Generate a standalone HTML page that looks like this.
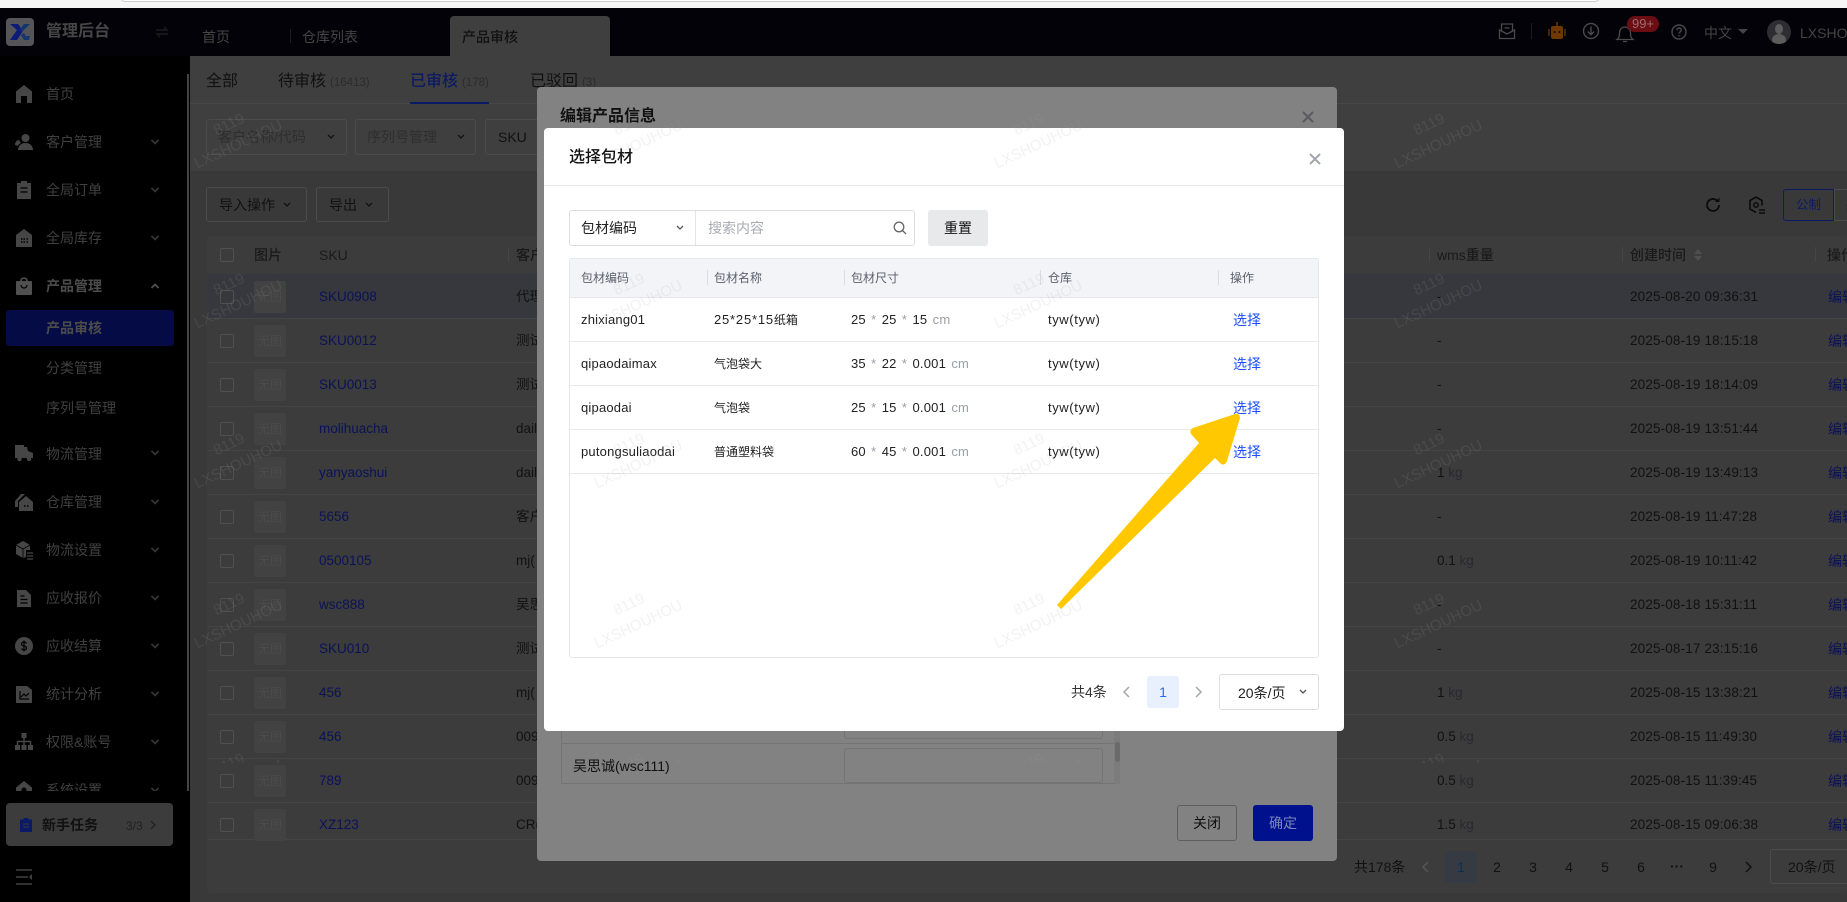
<!DOCTYPE html>
<html lang="zh"><head><meta charset="utf-8"><title>产品审核</title>
<style>
*{box-sizing:border-box}
html,body{margin:0;padding:0;width:1847px;height:902px;overflow:hidden;background:#393939;font-family:"Liberation Sans","Noto Sans CJK SC",sans-serif;font-size:13px;color:#111}
.a{position:absolute}
.t{position:absolute;white-space:nowrap;line-height:20px;height:20px}
svg{position:absolute;overflow:visible}
.tb .sku{left:319px;color:#0b1258;font-size:13.5px}
.tb .cu{left:516px;font-size:13.5px;color:#111}
.tb .w{left:1437px;font-size:13.5px;color:#111}
.tb .w i{font-style:normal;color:#2a2a2e}
.tb .d{left:1630px;font-size:13.5px;letter-spacing:.15px;color:#111}
.tb .e{left:1828px;font-size:14px;color:#0b1258}
.tb .l{position:absolute;left:207px;width:1640px;height:1px;background:#444}
.cb{position:absolute;left:220px;width:14px;height:14px;border:1px solid #505050;border-radius:2px}
.th{position:absolute;left:254px;width:32px;height:32px;background:#424242;border-radius:2px;color:#4b4b4b;font-size:12px;line-height:32px;text-align:center}
.bt{position:absolute;border:1px solid #4c4c4c;border-radius:3px}
.dl .t{font-size:13px;color:#222;letter-spacing:.2px}
.dl .h{color:#5a5f6b;font-size:12px;letter-spacing:0}
.dl .n{font-size:13px;letter-spacing:.8px}
.dl .n b{font-weight:400;font-size:12px;letter-spacing:0}
.dl .y{letter-spacing:.6px}
.dl .s{color:#1d4fff;font-size:14px;left:1233px;letter-spacing:0}
.dl .rl{position:absolute;left:570px;width:748px;height:1px;background:#e8e9ec}
.dl .sp{position:absolute;top:270px;width:1px;height:15px;background:#dcdde2}
.dl i{font-style:normal;color:#9a9da5;margin:0 1.5px}
.wm{position:absolute;width:130px;height:44px;margin:-22px 0 0 -65px;text-align:center;font-size:15px;line-height:22px;color:rgba(160,160,160,.14);transform:rotate(-25deg);white-space:nowrap}
.m{position:absolute;left:46px;white-space:nowrap;line-height:20px;height:20px;font-size:14px;color:#404040}
</style></head><body>

<!-- browser strip -->
<div class="a" style="left:0;top:0;width:1847px;height:9px;background:#f6f6f6"></div>
<div class="a" style="left:120px;top:-8px;width:1480px;height:10px;background:#fff;border:1px solid #ccc;border-radius:6px"></div>

<!-- main background -->
<div class="a" style="left:190px;top:56px;width:1657px;height:115px;background:#3f3f3f"></div>
<div class="a" style="left:190px;top:103px;width:1657px;height:1px;background:#474747"></div>
<div class="a" style="left:207px;top:236px;width:1640px;height:657px;background:#3c3c3c;border-radius:3px"></div>

<!-- tabs -->
<div class="t" style="left:206px;top:72px;font-size:16px;color:#111">全部</div>
<div class="t" style="left:278px;top:72px;font-size:16px;color:#111">待审核</div>
<div class="t" style="left:330px;top:73px;font-size:11.5px;color:#2c2c2c">(16413)</div>
<div class="t" style="left:410px;top:72px;font-size:16px;color:#0b1a66;font-weight:500">已审核</div>
<div class="t" style="left:462px;top:73px;font-size:11.5px;color:#2c2c2c">(178)</div>
<div class="a" style="left:410px;top:102px;width:79px;height:2px;background:#0b1a66"></div>
<div class="t" style="left:530px;top:72px;font-size:16px;color:#111">已驳回</div>
<div class="t" style="left:582px;top:73px;font-size:11.5px;color:#2c2c2c">(3)</div>

<!-- filters -->
<div class="bt" style="left:206px;top:119px;width:141px;height:36px"></div>
<div class="t" style="left:218px;top:127px;font-size:14px;color:#2e2e2e">客户名称/代码</div>
<svg style="left:326px;top:133px" width="10" height="8" viewBox="0 0 10 8"><path d="M2 2l3 3 3-3" fill="none" stroke="#111" stroke-width="1.3"/></svg>
<div class="bt" style="left:355px;top:119px;width:121px;height:36px"></div>
<div class="t" style="left:367px;top:127px;font-size:14px;color:#2e2e2e">序列号管理</div>
<svg style="left:456px;top:133px" width="10" height="8" viewBox="0 0 10 8"><path d="M2 2l3 3 3-3" fill="none" stroke="#111" stroke-width="1.3"/></svg>
<div class="bt" style="left:485px;top:119px;width:70px;height:36px"></div>
<div class="t" style="left:498px;top:127px;font-size:14px;color:#111">SKU</div>

<div class="bt" style="left:206px;top:187px;width:101px;height:35px"></div>
<div class="t" style="left:219px;top:195px;font-size:14px;color:#111">导入操作</div>
<svg style="left:282px;top:201px" width="10" height="8" viewBox="0 0 10 8"><path d="M2 2l3 3 3-3" fill="none" stroke="#111" stroke-width="1.3"/></svg>
<div class="bt" style="left:316px;top:187px;width:73px;height:35px"></div>
<div class="t" style="left:329px;top:195px;font-size:14px;color:#111">导出</div>
<svg style="left:364px;top:201px" width="10" height="8" viewBox="0 0 10 8"><path d="M2 2l3 3 3-3" fill="none" stroke="#111" stroke-width="1.3"/></svg>

<!-- table right tools -->
<svg style="left:1703px;top:195px" width="20" height="20" viewBox="0 0 20 20"><path d="M16 10a6 6 0 1 1-2-4.500" fill="none" stroke="#0c0c0c" stroke-width="1.800"/><path d="M16.500 2.500v4.500h-4.500z" fill="#0c0c0c"/></svg>
<svg style="left:1747px;top:195px" width="20" height="20" viewBox="0 0 20 20"><path d="M9 2l6 3.500v5M9 17.500l-6-3.500v-8.500l6-3.500" fill="none" stroke="#0c0c0c" stroke-width="1.600"/><circle cx="9" cy="10" r="2.200" fill="none" stroke="#0c0c0c" stroke-width="1.500"/><path d="M12 15h6M12 18h6" stroke="#0c0c0c" stroke-width="1.400"/></svg>
<div class="a" style="left:1783px;top:189px;width:51px;height:32px;border:1px solid #0b1a66;border-radius:3px 0 0 3px;color:#0b1a66;font-size:12.500px;line-height:30px;text-align:center">公制</div>
<div class="a" style="left:1834px;top:189px;width:40px;height:32px;border:1px solid #4c4c4c;color:#111;font-size:12.500px;line-height:30px;padding-left:11px">英制</div>

<!-- table -->
<div class="tb">
<div class="cb" style="top:248px"></div>
<div class="t" style="left:254px;top:245px;font-size:14px;font-weight:500;color:#1a1a1a">图片</div>
<div class="t" style="left:319px;top:245px;font-size:14px;color:#1a1a1a">SKU</div>
<div class="a" style="left:508px;top:247px;width:1px;height:15px;background:#464646"></div>
<div class="t" style="left:516px;top:245px;font-size:14px;font-weight:500;color:#1a1a1a">客户名称</div>
<div class="a" style="left:1429px;top:247px;width:1px;height:15px;background:#464646"></div>
<div class="t" style="left:1437px;top:245px;font-size:14px;color:#1a1a1a;font-weight:500">wms重量</div>
<div class="a" style="left:1622px;top:247px;width:1px;height:15px;background:#464646"></div>
<div class="t" style="left:1630px;top:245px;font-size:14px;color:#1a1a1a;font-weight:500">创建时间</div>
<svg style="left:1693px;top:248px" width="10" height="14" viewBox="0 0 10 14"><path d="M5 1l4 5H1zM5 13l4-5H1z" fill="#4f4f4f"/></svg>
<div class="a" style="left:1815px;top:247px;width:1px;height:15px;background:#464646"></div>
<div class="t" style="left:1827px;top:245px;font-size:14px;color:#1a1a1a;font-weight:500">操作</div>

<div class="a" style="left:207px;top:274px;width:1640px;height:44px;background:#36383d"></div>
<div class="l" style="top:318px"></div><div class="l" style="top:362px"></div><div class="l" style="top:406px"></div><div class="l" style="top:450px"></div><div class="l" style="top:494px"></div><div class="l" style="top:538px"></div><div class="l" style="top:582px"></div><div class="l" style="top:626px"></div><div class="l" style="top:670px"></div><div class="l" style="top:714px"></div><div class="l" style="top:758px"></div><div class="l" style="top:802px"></div><div class="l" style="top:839px"></div>

<div class="cb" style="top:290px"></div><div class="th" style="top:281px">无图</div><div class="t sku" style="top:287px">SKU0908</div><div class="t cu" style="top:287px">代理商</div><div class="t w" style="top:287px">-</div><div class="t d" style="top:287px">2025-08-20 09:36:31</div><div class="t e" style="top:287px">编辑</div>
<div class="cb" style="top:334px"></div><div class="th" style="top:325px">无图</div><div class="t sku" style="top:331px">SKU0012</div><div class="t cu" style="top:331px">测试</div><div class="t w" style="top:331px">-</div><div class="t d" style="top:331px">2025-08-19 18:15:18</div><div class="t e" style="top:331px">编辑</div>
<div class="cb" style="top:378px"></div><div class="th" style="top:369px">无图</div><div class="t sku" style="top:375px">SKU0013</div><div class="t cu" style="top:375px">测试</div><div class="t w" style="top:375px">-</div><div class="t d" style="top:375px">2025-08-19 18:14:09</div><div class="t e" style="top:375px">编辑</div>
<div class="cb" style="top:422px"></div><div class="th" style="top:413px">无图</div><div class="t sku" style="top:419px">molihuacha</div><div class="t cu" style="top:419px">daily</div><div class="t w" style="top:419px">-</div><div class="t d" style="top:419px">2025-08-19 13:51:44</div><div class="t e" style="top:419px">编辑</div>
<div class="cb" style="top:466px"></div><div class="th" style="top:457px">无图</div><div class="t sku" style="top:463px">yanyaoshui</div><div class="t cu" style="top:463px">daily</div><div class="t w" style="top:463px">1 <i>kg</i></div><div class="t d" style="top:463px">2025-08-19 13:49:13</div><div class="t e" style="top:463px">编辑</div>
<div class="cb" style="top:510px"></div><div class="th" style="top:501px">无图</div><div class="t sku" style="top:507px">5656</div><div class="t cu" style="top:507px">客户</div><div class="t w" style="top:507px">-</div><div class="t d" style="top:507px">2025-08-19 11:47:28</div><div class="t e" style="top:507px">编辑</div>
<div class="cb" style="top:554px"></div><div class="th" style="top:545px">无图</div><div class="t sku" style="top:551px">0500105</div><div class="t cu" style="top:551px">mj(</div><div class="t w" style="top:551px">0.1 <i>kg</i></div><div class="t d" style="top:551px">2025-08-19 10:11:42</div><div class="t e" style="top:551px">编辑</div>
<div class="cb" style="top:598px"></div><div class="th" style="top:589px">无图</div><div class="t sku" style="top:595px">wsc888</div><div class="t cu" style="top:595px">吴思诚</div><div class="t w" style="top:595px">-</div><div class="t d" style="top:595px">2025-08-18 15:31:11</div><div class="t e" style="top:595px">编辑</div>
<div class="cb" style="top:642px"></div><div class="th" style="top:633px">无图</div><div class="t sku" style="top:639px">SKU010</div><div class="t cu" style="top:639px">测试</div><div class="t w" style="top:639px">-</div><div class="t d" style="top:639px">2025-08-17 23:15:16</div><div class="t e" style="top:639px">编辑</div>
<div class="cb" style="top:686px"></div><div class="th" style="top:677px">无图</div><div class="t sku" style="top:683px">456</div><div class="t cu" style="top:683px">mj(</div><div class="t w" style="top:683px">1 <i>kg</i></div><div class="t d" style="top:683px">2025-08-15 13:38:21</div><div class="t e" style="top:683px">编辑</div>
<div class="cb" style="top:730px"></div><div class="th" style="top:721px">无图</div><div class="t sku" style="top:727px">456</div><div class="t cu" style="top:727px">009</div><div class="t w" style="top:727px">0.5 <i>kg</i></div><div class="t d" style="top:727px">2025-08-15 11:49:30</div><div class="t e" style="top:727px">编辑</div>
<div class="cb" style="top:774px"></div><div class="th" style="top:765px">无图</div><div class="t sku" style="top:771px">789</div><div class="t cu" style="top:771px">009</div><div class="t w" style="top:771px">0.5 <i>kg</i></div><div class="t d" style="top:771px">2025-08-15 11:39:45</div><div class="t e" style="top:771px">编辑</div>
<div class="cb" style="top:818px"></div><div class="th" style="top:809px">无图</div><div class="t sku" style="top:815px">XZ123</div><div class="t cu" style="top:815px">CR(</div><div class="t w" style="top:815px">1.5 <i>kg</i></div><div class="t d" style="top:815px">2025-08-15 09:06:38</div><div class="t e" style="top:815px">编辑</div>
</div>

<!-- main pagination -->
<div class="t" style="left:1354px;top:857px;font-size:14px;color:#111">共178条</div>
<svg style="left:1421px;top:861px" width="10" height="12" viewBox="0 0 10 12"><path d="M7 1L2 6l5 5" fill="none" stroke="#555" stroke-width="1.500"/></svg>
<div class="a" style="left:1445px;top:851px;width:32px;height:32px;background:#363a42;border-radius:3px;text-align:center;line-height:32px;font-size:14px;color:#0b2e55">1</div>
<div class="t" style="left:1481px;width:32px;text-align:center;top:857px;font-size:14px;color:#111">2</div>
<div class="t" style="left:1517px;width:32px;text-align:center;top:857px;font-size:14px;color:#111">3</div>
<div class="t" style="left:1553px;width:32px;text-align:center;top:857px;font-size:14px;color:#111">4</div>
<div class="t" style="left:1589px;width:32px;text-align:center;top:857px;font-size:14px;color:#111">5</div>
<div class="t" style="left:1625px;width:32px;text-align:center;top:857px;font-size:14px;color:#111">6</div>
<div class="t" style="left:1661px;width:32px;text-align:center;top:856px;font-size:14px;font-weight:700;color:#111">···</div>
<div class="t" style="left:1697px;width:32px;text-align:center;top:857px;font-size:14px;color:#111">9</div>
<svg style="left:1743px;top:861px" width="10" height="12" viewBox="0 0 10 12"><path d="M3 1l5 5-5 5" fill="none" stroke="#111" stroke-width="1.500"/></svg>
<div class="a" style="left:1770px;top:849px;width:100px;height:35px;border:1px solid #4c4c4c;border-radius:3px"></div>
<div class="t" style="left:1788px;top:857px;font-size:14px;color:#111">20条/页</div>

<!-- header -->
<div class="a" style="left:0;top:8px;width:1847px;height:48px;background:#020208"></div>
<div class="a" style="left:6px;top:18px;width:28px;height:28px;background:#555557;border-radius:4px"></div>
<svg style="left:6px;top:18px" width="28" height="28" viewBox="0 0 28 28"><path d="M4 6h8l5 7-6 9H4l7-10z" fill="#0c1a78"/><path d="M24 6h-6l-4 5 2 3zM18 15l4 7h-4l-3-5zM24 18l-1 4h-1l-2-4z" fill="#12366e"/></svg>
<div class="t" style="left:46px;top:22px;font-size:16px;font-weight:700;color:#464646">管理后台</div>
<svg style="left:155px;top:26px" width="14" height="12" viewBox="0 0 14 12"><path d="M1 4h11L9 1M13 8H2l3 3" fill="none" stroke="#1c1c1c" stroke-width="1.400"/></svg>
<div class="t" style="left:202px;top:27px;font-size:14px;color:#454545">首页</div>
<div class="a" style="left:290px;top:29px;width:1px;height:14px;background:#1c1c1c"></div>
<div class="t" style="left:302px;top:27px;font-size:14px;color:#454545">仓库列表</div>
<div class="a" style="left:450px;top:16px;width:160px;height:40px;background:#3f3f3f;border-radius:4px 4px 0 0"></div>
<div class="t" style="left:462px;top:27px;font-size:14px;font-weight:500;color:#111">产品审核</div>

<svg style="left:1498px;top:22px" width="18" height="18" viewBox="0 0 18 18" fill="none" stroke="#4a4a4a" stroke-width="1.300"><path d="M3.500 9V2h11v7"/><path d="M1.500 8l7.500 4 7.500-4v8.500h-15z"/><path d="M6.500 6h5"/></svg>
<div class="a" style="left:1531px;top:23px;width:1px;height:16px;background:#1c1c1c"></div>
<svg style="left:1548px;top:22px" width="18" height="18" viewBox="0 0 18 18"><path d="M9 0v4" stroke="#6e3800" stroke-width="1.500"/><rect x="3" y="4" width="12" height="13" rx="2" fill="#6e3800"/><path d="M1 7v7M17 7v7" stroke="#6e3800" stroke-width="1.300"/><circle cx="6.500" cy="10" r="1" fill="#0a0a0a"/><circle cx="11.500" cy="10" r="1" fill="#0a0a0a"/></svg>
<svg style="left:1582px;top:22px" width="18" height="18" viewBox="0 0 18 18" fill="none" stroke="#4a4a4a" stroke-width="1.400"><circle cx="9" cy="9" r="7.500"/><path d="M9 4.500v8M5.800 9.500L9 12.700l3.200-3.200"/></svg>
<svg style="left:1616px;top:24px" width="18" height="19" viewBox="0 0 18 19" fill="none" stroke="#4a4a4a" stroke-width="1.300"><path d="M1 15.500c2-1.500 2.500-3 2.500-6.500 0-3.500 2.500-6 5.500-6s5.500 2.500 5.500 6c0 3.500.5 5 2.500 6.500z"/><path d="M7 17.500h4"/></svg>
<div class="a" style="left:1627px;top:16px;width:32px;height:16px;background:#6b0e14;border-radius:8px;color:#a06a6e;font-size:13px;line-height:16px;text-align:center">99+</div>
<svg style="left:1671px;top:24px" width="16" height="16" viewBox="0 0 16 16" fill="none" stroke="#4a4a4a" stroke-width="1.400"><circle cx="8" cy="8" r="7"/><path d="M5.800 6.200c0-1.300 1-2.200 2.200-2.200s2.200.9 2.200 2.100c0 1.800-2.200 1.800-2.200 3.500M8 11v1.500"/></svg>
<div class="t" style="left:1704px;top:23px;font-size:14px;color:#454545">中文</div>
<svg style="left:1738px;top:29px" width="10" height="6" viewBox="0 0 10 6"><path d="M0 0h10L5 5z" fill="#454545"/></svg>
<div class="a" style="left:1767px;top:20px;width:24px;height:24px;border-radius:50%;background:#2e2e32;overflow:hidden"><div class="a" style="left:8px;top:4px;width:8px;height:10px;border-radius:50%;background:#5c5c5c"></div><div class="a" style="left:5px;top:14px;width:14px;height:12px;border-radius:50%;background:#5c5c5c"></div></div>
<div class="t" style="left:1800px;top:23px;font-size:14px;color:#454545">LXSHOUHOU</div>

<!-- sidebar -->
<div class="a" style="left:0;top:56px;width:190px;height:846px;background:#000"></div>
<div class="a" style="left:187px;top:74px;width:2px;height:717px;background:#444"></div>
<div class="a" style="left:0;top:60px;width:187px;height:731px;overflow:hidden">
<svg style="left:15px;top:25px" width="18" height="18" viewBox="0 0 18 18"><path d="M9 0l8 6.500V18h-5v-7H6v7H1V6.500z" fill="#464646"/></svg>
<div class="m" style="top:24px">首页</div>

<svg style="left:15px;top:73px" width="18" height="18" viewBox="0 0 18 18"><circle cx="10.500" cy="5" r="4" fill="#464646"/><path d="M3 17c0-4 3-7 7.500-7s7.500 3 7.500 7z" fill="#464646"/><path d="M0 12c0-3 2-5 4-5 .5 1 1 2 2 3-2 1-3 2-3 3z" fill="#464646"/></svg>
<div class="m" style="top:72px">客户管理</div>
<svg style="left:150px;top:78px" width="10" height="8" viewBox="0 0 10 8"><path d="M1.500 2L5 5.500 8.500 2" fill="none" stroke="#363636" stroke-width="1.600"/></svg>

<svg style="left:15px;top:121px" width="18" height="18" viewBox="0 0 18 18"><path d="M2 2h4V0h6v2h4v16H2z" fill="#464646"/><path d="M5.500 7h7M5.500 11h7" stroke="#000" stroke-width="1.200"/></svg>
<div class="m" style="top:120px">全局订单</div>
<svg style="left:150px;top:126px" width="10" height="8" viewBox="0 0 10 8"><path d="M1.500 2L5 5.500 8.500 2" fill="none" stroke="#363636" stroke-width="1.600"/></svg>

<svg style="left:15px;top:169px" width="18" height="18" viewBox="0 0 18 18"><path d="M9 0l8 6v12H1V6z" fill="#464646"/><path d="M6 10h1.500M8.500 10H10M11.500 10H13M6 13h1.500M8.500 13H10M11.500 13H13" stroke="#000" stroke-width="1.400"/></svg>
<div class="m" style="top:168px">全局库存</div>
<svg style="left:150px;top:174px" width="10" height="8" viewBox="0 0 10 8"><path d="M1.500 2L5 5.500 8.500 2" fill="none" stroke="#363636" stroke-width="1.600"/></svg>

<svg style="left:15px;top:217px" width="18" height="18" viewBox="0 0 18 18"><rect x="1" y="4" width="16" height="14" rx="1" fill="#505050"/><path d="M6 4c0-4 6-4 6 0" fill="none" stroke="#505050" stroke-width="1.600"/><path d="M6 8c0 4 6 4 6 0" fill="none" stroke="#000" stroke-width="1.200"/></svg>
<div class="m" style="top:216px;font-weight:700;color:#4c4c4c">产品管理</div>
<svg style="left:150px;top:222px" width="10" height="8" viewBox="0 0 10 8"><path d="M1.500 6L5 2.500 8.500 6" fill="none" stroke="#505050" stroke-width="1.800"/></svg>

<div class="a" style="left:6px;top:250px;width:168px;height:36px;background:#040b45;border-radius:3px"></div>
<div class="m" style="top:258px;font-weight:700;color:#4c4c4c">产品审核</div>
<div class="m" style="top:298px">分类管理</div>
<div class="m" style="top:338px">序列号管理</div>

<svg style="left:15px;top:384px" width="18" height="18" viewBox="0 0 18 18"><path d="M0 1h9v2h3l1 4 5 2v5H0z" fill="#464646"/><circle cx="4.500" cy="15" r="2.200" fill="#464646"/><circle cx="14" cy="15" r="2.200" fill="#464646"/></svg>
<div class="m" style="top:384px">物流管理</div>
<svg style="left:150px;top:389px" width="10" height="8" viewBox="0 0 10 8"><path d="M1.500 2L5 5.500 8.500 2" fill="none" stroke="#363636" stroke-width="1.600"/></svg>

<svg style="left:15px;top:433px" width="18" height="18" viewBox="0 0 18 18"><path d="M11 3l7 6v9H4V9z" fill="#464646"/><path d="M0 8l6-7h4L3 8v6H0z" fill="#464646"/><path d="M9 13h1.500M12 13h1.500" stroke="#000" stroke-width="1.500"/></svg>
<div class="m" style="top:432px">仓库管理</div>
<svg style="left:150px;top:438px" width="10" height="8" viewBox="0 0 10 8"><path d="M1.500 2L5 5.500 8.500 2" fill="none" stroke="#363636" stroke-width="1.600"/></svg>

<svg style="left:15px;top:481px" width="18" height="18" viewBox="0 0 18 18"><path d="M8 0l7 4v5h-4v7l-3 1-7-4V4z" fill="#464646"/><path d="M1 4l7 4 7-4M8 8v9" stroke="#000" stroke-width=".8" fill="none"/><path d="M12 12h6M12 15h6M12 18h6" stroke="#464646" stroke-width="1.200"/></svg>
<div class="m" style="top:480px">物流设置</div>
<svg style="left:150px;top:486px" width="10" height="8" viewBox="0 0 10 8"><path d="M1.500 2L5 5.500 8.500 2" fill="none" stroke="#363636" stroke-width="1.600"/></svg>

<svg style="left:15px;top:529px" width="18" height="18" viewBox="0 0 18 18"><path d="M2 1h9l5 5v12H2z" fill="#464646"/><path d="M5.500 7h4M5.500 10.500h7M5.500 14h7" stroke="#000" stroke-width="1.200"/></svg>
<div class="m" style="top:528px">应收报价</div>
<svg style="left:150px;top:534px" width="10" height="8" viewBox="0 0 10 8"><path d="M1.500 2L5 5.500 8.500 2" fill="none" stroke="#363636" stroke-width="1.600"/></svg>

<svg style="left:15px;top:577px" width="18" height="18" viewBox="0 0 18 18"><circle cx="9" cy="9" r="9" fill="#464646"/><path d="M11.500 6.500C11 5.500 10 5 9 5c-1.500 0-2.500.8-2.500 2s1 1.700 2.500 2 2.500.8 2.500 2-1 2-2.500 2c-1 0-2-.5-2.500-1.500M9 3.500v11" fill="none" stroke="#000" stroke-width="1.200"/></svg>
<div class="m" style="top:576px">应收结算</div>
<svg style="left:150px;top:582px" width="10" height="8" viewBox="0 0 10 8"><path d="M1.500 2L5 5.500 8.500 2" fill="none" stroke="#363636" stroke-width="1.600"/></svg>

<svg style="left:15px;top:625px" width="18" height="18" viewBox="0 0 18 18"><path d="M1 1h11l5 4v13H1z" fill="#464646"/><path d="M5 6v8h9M6 12l3-3 2 2 3-3" fill="none" stroke="#000" stroke-width="1.200"/></svg>
<div class="m" style="top:624px">统计分析</div>
<svg style="left:150px;top:630px" width="10" height="8" viewBox="0 0 10 8"><path d="M1.500 2L5 5.500 8.500 2" fill="none" stroke="#363636" stroke-width="1.600"/></svg>

<svg style="left:15px;top:673px" width="18" height="18" viewBox="0 0 18 18"><path d="M6.500 0h5v5h-5zM0 12h5v5H0zM6.500 12h5v5h-5zM13 12h5v5h-5z" fill="#464646"/><path d="M9 5v7M2.500 12V8.500h13V12" fill="none" stroke="#464646" stroke-width="1.400"/></svg>
<div class="m" style="top:672px">权限&amp;账号</div>
<svg style="left:150px;top:678px" width="10" height="8" viewBox="0 0 10 8"><path d="M1.500 2L5 5.500 8.500 2" fill="none" stroke="#363636" stroke-width="1.600"/></svg>

<svg style="left:15px;top:721px" width="18" height="18" viewBox="0 0 18 18"><path d="M9 0l8 6.500V18H1V6.500z" fill="#464646"/><circle cx="9" cy="9" r="2.500" fill="#000"/></svg>
<div class="m" style="top:720px">系统设置</div>
<svg style="left:150px;top:726px" width="10" height="8" viewBox="0 0 10 8"><path d="M1.500 2L5 5.500 8.500 2" fill="none" stroke="#363636" stroke-width="1.600"/></svg>
</div>

<div class="a" style="left:6px;top:803px;width:167px;height:43px;background:#3c3c3c;border-radius:4px"></div>
<svg style="left:20px;top:818px" width="12" height="14" viewBox="0 0 12 14"><path d="M0 1.500h3.500V0h5v1.500H12V14H0z" fill="#0b1a66"/><path d="M3 6h6M3 9h6" stroke="#3c3c3c" stroke-width="1"/></svg>
<div class="t" style="left:42px;top:815px;font-size:14px;font-weight:700;color:#111">新手任务</div>
<div class="t" style="left:126px;top:816px;font-size:12px;color:#222">3/3</div>
<svg style="left:149px;top:819px" width="8" height="12" viewBox="0 0 8 12"><path d="M2 2l4 4-4 4" fill="none" stroke="#222" stroke-width="1.400"/></svg>
<svg style="left:16px;top:869px" width="16" height="16" viewBox="0 0 16 16"><path d="M0 1h16M0 8h12M0 15h16" stroke="#404040" stroke-width="1.600"/><path d="M16 5v6l-3-3z" fill="#404040"/></svg>

<!-- back dialog -->
<div class="a" style="left:537px;top:87px;width:800px;height:774px;background:#828282;border-radius:4px"></div>
<div class="t" style="left:560px;top:107px;font-size:16px;font-weight:700;color:#111">编辑产品信息</div>
<svg style="left:1302px;top:111px" width="12" height="12" viewBox="0 0 12 12"><path d="M1 1l10 10M11 1L1 11" stroke="#5a5a5e" stroke-width="2"/></svg>
<div class="a" style="left:561px;top:700px;width:559px;height:84px;border:1px solid #747474;border-top:0"></div>
<div class="a" style="left:561px;top:743px;width:553px;height:1px;background:#747474"></div>
<div class="a" style="left:844px;top:700px;width:259px;height:39px;border:1px solid #747474;border-radius:3px"></div>
<div class="a" style="left:844px;top:748px;width:259px;height:35px;border:1px solid #747474;border-radius:3px"></div>
<div class="a" style="left:1114px;top:700px;width:6px;height:84px;background:#7c7c7c"></div>
<div class="a" style="left:1115px;top:742px;width:5px;height:20px;background:#6a6a6a;border-radius:3px"></div>
<div class="t" style="left:573px;top:756px;font-size:14px;color:#111">吴思诚(wsc111)</div>
<div class="a" style="left:1177px;top:805px;width:60px;height:36px;border:1px solid #5e5e5e;border-radius:3px;text-align:center;line-height:34px;font-size:14px;color:#111">关闭</div>
<div class="a" style="left:1253px;top:805px;width:60px;height:36px;background:#00118e;border-radius:3px;text-align:center;line-height:36px;font-size:14px;color:#7a86b8">确定</div>

<!-- top dialog -->
<div class="a dl" style="left:0;top:0;width:1847px;height:902px">
<div class="a" style="left:544px;top:128px;width:800px;height:603px;background:#fff;border-radius:4px"></div>
<div class="t" style="left:569px;top:148px;font-size:16px;font-weight:500;color:#111;letter-spacing:0">选择包材</div>
<svg style="left:1309px;top:153px" width="12" height="12" viewBox="0 0 12 12"><path d="M1 1l10 10M11 1L1 11" stroke="#a3a6ad" stroke-width="2"/></svg>
<div class="a" style="left:544px;top:185px;width:800px;height:1px;background:#e8e9ec"></div>

<div class="a" style="left:569px;top:210px;width:346px;height:36px;border:1px solid #dcdde2;border-radius:3px"></div>
<div class="a" style="left:695px;top:211px;width:1px;height:34px;background:#e4e5e8"></div>
<div class="t" style="left:581px;top:218px;font-size:14px;color:#222;letter-spacing:0">包材编码</div>
<svg style="left:675px;top:224px" width="10" height="8" viewBox="0 0 10 8"><path d="M2 2l3 3 3-3" fill="none" stroke="#555" stroke-width="1.300"/></svg>
<div class="t" style="left:708px;top:218px;font-size:14px;color:#a8abb2;letter-spacing:0">搜索内容</div>
<svg style="left:893px;top:221px" width="14" height="14" viewBox="0 0 14 14" fill="none" stroke="#666" stroke-width="1.300"><circle cx="6" cy="6" r="4.800"/><path d="M9.500 9.500L13 13"/></svg>
<div class="a" style="left:928px;top:210px;width:60px;height:36px;background:#e8e9eb;border-radius:3px;text-align:center;line-height:36px;font-size:14px;color:#111">重置</div>

<div class="a" style="left:569px;top:258px;width:750px;height:400px;border:1px solid #e6e7ea;border-radius:3px"></div>
<div class="a" style="left:570px;top:259px;width:748px;height:39px;background:#f3f4f8;border-bottom:1px solid #e6e7ea"></div>
<div class="t h" style="left:581px;top:268px">包材编码</div>
<div class="t h" style="left:714px;top:268px">包材名称</div>
<div class="t h" style="left:851px;top:268px">包材尺寸</div>
<div class="t h" style="left:1048px;top:268px">仓库</div>
<div class="t h" style="left:1230px;top:268px">操作</div>
<div class="sp" style="left:707px"></div><div class="sp" style="left:844px"></div><div class="sp" style="left:1040px"></div><div class="sp" style="left:1218px"></div>
<div class="rl" style="top:341px"></div><div class="rl" style="top:385px"></div><div class="rl" style="top:429px"></div><div class="rl" style="top:473px"></div>

<div class="t" style="left:581px;top:310px">zhixiang01</div>
<div class="t n" style="left:714px;top:310px">25*25*15<b>纸箱</b></div>
<div class="t" style="left:851px;top:310px">25 <i>*</i> 25 <i>*</i> 15 <i>cm</i></div>
<div class="t y" style="left:1048px;top:310px">tyw(tyw)</div>
<div class="t s" style="top:310px">选择</div>

<div class="t" style="left:581px;top:354px">qipaodaimax</div>
<div class="t n" style="left:714px;top:354px"><b>气泡袋大</b></div>
<div class="t" style="left:851px;top:354px">35 <i>*</i> 22 <i>*</i> 0.001 <i>cm</i></div>
<div class="t y" style="left:1048px;top:354px">tyw(tyw)</div>
<div class="t s" style="top:354px">选择</div>

<div class="t" style="left:581px;top:398px">qipaodai</div>
<div class="t n" style="left:714px;top:398px"><b>气泡袋</b></div>
<div class="t" style="left:851px;top:398px">25 <i>*</i> 15 <i>*</i> 0.001 <i>cm</i></div>
<div class="t y" style="left:1048px;top:398px">tyw(tyw)</div>
<div class="t s" style="top:398px">选择</div>

<div class="t" style="left:581px;top:442px">putongsuliaodai</div>
<div class="t n" style="left:714px;top:442px"><b>普通塑料袋</b></div>
<div class="t" style="left:851px;top:442px">60 <i>*</i> 45 <i>*</i> 0.001 <i>cm</i></div>
<div class="t y" style="left:1048px;top:442px">tyw(tyw)</div>
<div class="t s" style="top:442px">选择</div>

<div class="t" style="left:1071px;top:682px;font-size:14px;color:#333;letter-spacing:0">共4条</div>
<svg style="left:1122px;top:686px" width="10" height="12" viewBox="0 0 10 12"><path d="M7 1L2 6l5 5" fill="none" stroke="#a3a6ad" stroke-width="1.500"/></svg>
<div class="a" style="left:1147px;top:676px;width:32px;height:32px;background:#e8f0fe;border-radius:3px;text-align:center;line-height:32px;font-size:14px;color:#2b6cff">1</div>
<svg style="left:1193px;top:686px" width="10" height="12" viewBox="0 0 10 12"><path d="M3 1l5 5-5 5" fill="none" stroke="#a3a6ad" stroke-width="1.500"/></svg>
<div class="a" style="left:1219px;top:674px;width:100px;height:36px;border:1px solid #dcdde2;border-radius:3px"></div>
<div class="t" style="left:1238px;top:683px;font-size:14px;color:#222;letter-spacing:0">20条/页</div>
<svg style="left:1298px;top:688px" width="10" height="8" viewBox="0 0 10 8"><path d="M2 2l3 3 3-3" fill="none" stroke="#555" stroke-width="1.300"/></svg>
</div>

<!-- watermarks -->
<div class="a" style="left:0;top:0;width:1847px;height:763px;overflow:hidden;pointer-events:none">
<div class="wm" style="left:234px;top:135px">8119<br>LXSHOUHOU</div><div class="wm" style="left:634px;top:135px">8119<br>LXSHOUHOU</div><div class="wm" style="left:1034px;top:135px">8119<br>LXSHOUHOU</div><div class="wm" style="left:1434px;top:135px">8119<br>LXSHOUHOU</div>
<div class="wm" style="left:234px;top:295px">8119<br>LXSHOUHOU</div><div class="wm" style="left:634px;top:295px">8119<br>LXSHOUHOU</div><div class="wm" style="left:1034px;top:295px">8119<br>LXSHOUHOU</div><div class="wm" style="left:1434px;top:295px">8119<br>LXSHOUHOU</div>
<div class="wm" style="left:234px;top:455px">8119<br>LXSHOUHOU</div><div class="wm" style="left:634px;top:455px">8119<br>LXSHOUHOU</div><div class="wm" style="left:1034px;top:455px">8119<br>LXSHOUHOU</div><div class="wm" style="left:1434px;top:455px">8119<br>LXSHOUHOU</div>
<div class="wm" style="left:234px;top:615px">8119<br>LXSHOUHOU</div><div class="wm" style="left:634px;top:615px">8119<br>LXSHOUHOU</div><div class="wm" style="left:1034px;top:615px">8119<br>LXSHOUHOU</div><div class="wm" style="left:1434px;top:615px">8119<br>LXSHOUHOU</div>
<div class="wm" style="left:234px;top:775px">8119<br>LXSHOUHOU</div><div class="wm" style="left:634px;top:775px">8119<br>LXSHOUHOU</div><div class="wm" style="left:1034px;top:775px">8119<br>LXSHOUHOU</div><div class="wm" style="left:1434px;top:775px">8119<br>LXSHOUHOU</div>
</div>

<!-- arrow -->
<svg style="left:0;top:0" width="1847" height="902" viewBox="0 0 1847 902"><path d="M1057 605L1199 443L1191 434Q1189 430 1193 428L1235 414Q1240 413 1240 418L1227 461Q1225 466 1221 464L1215 458L1061 609Z" fill="#ffc800"/></svg>
</body></html>
